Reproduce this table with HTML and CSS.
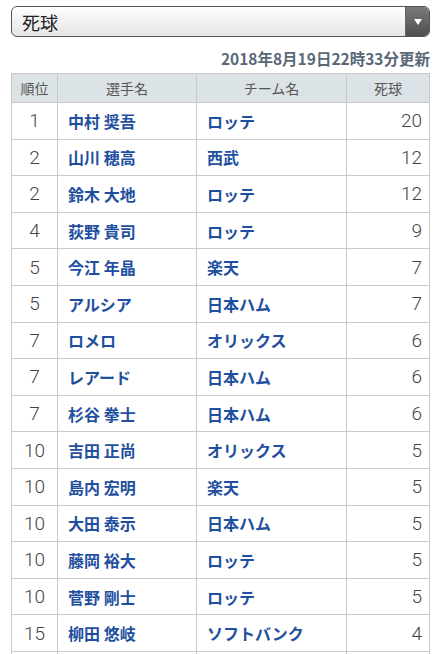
FILE: index.html
```html
<!DOCTYPE html>
<html lang="ja">
<head>
<meta charset="utf-8">
<link rel="stylesheet" href="styles.css">
</head>
<body>
<div class="page">
  <div class="select">
    <span class="select-label">死球</span>
    <span class="select-btn"><svg width="10" height="8" viewBox="0 0 10 8"><polygon points="1,1 9,1 5,7" fill="#fff"/></svg></span>
  </div>
  <div class="updated">2018年8月19日22時33分更新</div>
  <table class="rank">
    <thead>
      <tr><th class="c-rank">順位</th><th class="c-name">選手名</th><th class="c-team">チーム名</th><th class="c-val">死球</th></tr>
    </thead>
    <tbody>
      <tr><td class="c-rank">1</td><td class="c-name">中村 奨吾</td><td class="c-team">ロッテ</td><td class="c-val">20</td></tr>
      <tr><td class="c-rank">2</td><td class="c-name">山川 穂高</td><td class="c-team">西武</td><td class="c-val">12</td></tr>
      <tr><td class="c-rank">2</td><td class="c-name">鈴木 大地</td><td class="c-team">ロッテ</td><td class="c-val">12</td></tr>
      <tr><td class="c-rank">4</td><td class="c-name">荻野 貴司</td><td class="c-team">ロッテ</td><td class="c-val">9</td></tr>
      <tr><td class="c-rank">5</td><td class="c-name">今江 年晶</td><td class="c-team">楽天</td><td class="c-val">7</td></tr>
      <tr><td class="c-rank">5</td><td class="c-name">アルシア</td><td class="c-team">日本ハム</td><td class="c-val">7</td></tr>
      <tr><td class="c-rank">7</td><td class="c-name">ロメロ</td><td class="c-team">オリックス</td><td class="c-val">6</td></tr>
      <tr><td class="c-rank">7</td><td class="c-name">レアード</td><td class="c-team">日本ハム</td><td class="c-val">6</td></tr>
      <tr><td class="c-rank">7</td><td class="c-name">杉谷 拳士</td><td class="c-team">日本ハム</td><td class="c-val">6</td></tr>
      <tr><td class="c-rank">10</td><td class="c-name">吉田 正尚</td><td class="c-team">オリックス</td><td class="c-val">5</td></tr>
      <tr><td class="c-rank">10</td><td class="c-name">島内 宏明</td><td class="c-team">楽天</td><td class="c-val">5</td></tr>
      <tr><td class="c-rank">10</td><td class="c-name">大田 泰示</td><td class="c-team">日本ハム</td><td class="c-val">5</td></tr>
      <tr><td class="c-rank">10</td><td class="c-name">藤岡 裕大</td><td class="c-team">ロッテ</td><td class="c-val">5</td></tr>
      <tr><td class="c-rank">10</td><td class="c-name">菅野 剛士</td><td class="c-team">ロッテ</td><td class="c-val">5</td></tr>
      <tr><td class="c-rank">15</td><td class="c-name">柳田 悠岐</td><td class="c-team">ソフトバンク</td><td class="c-val">4</td></tr>
      <tr><td class="c-rank">&nbsp;</td><td class="c-name">&nbsp;</td><td class="c-team">&nbsp;</td><td class="c-val">&nbsp;</td></tr>
    </tbody>
  </table>
</div>
</body>
</html>
```

FILE: styles.css
```css
html, body {
  margin: 0;
  padding: 0;
  background: #fff;
}
body {
  font-family: "Noto Sans CJK JP", "Noto Sans", sans-serif;
  color: #333;
  overflow: hidden;
  height: 654px;
}
.page {
  padding: 6px 10px 0 11px;
}
.select {
  display: flex;
  align-items: stretch;
  height: 31px;
  box-sizing: border-box;
  border: 1px solid #555;
  border-radius: 6px;
  background: linear-gradient(#ffffff, #e4e4e4);
  overflow: hidden;
}
.select-label {
  flex: 1;
  display: flex;
  align-items: center;
  padding-left: 10px;
  font-size: 18px;
  color: #222;
  line-height: 1;
}
.select-btn {
  width: 23px;
  display: flex;
  align-items: center;
  justify-content: center;
  background: linear-gradient(#7a7a7a, #4e4e4e);
  border-left: 1px solid #666;
}
.updated {
  text-align: right;
  font-size: 15.5px;
  font-weight: bold;
  color: #5a6878;
  line-height: 20px;
  margin-top: 11px;
  margin-bottom: 5px;
}
.rank {
  width: 419px;
  border-collapse: collapse;
  table-layout: fixed;
}
.rank th, .rank td {
  border: 1px solid #c9c9c9;
  padding: 0;
}
.rank th {
  background: #dbe3e6;
  color: #555;
  font-weight: normal;
  font-size: 14px;
  height: 28px;
  text-align: center;
}
.rank td {
  height: 35.6px;
  font-size: 16px;
}
.rank .c-rank { width: 45px; }
.rank .c-name { width: 138px; }
.rank .c-team { width: 149px; }
td.c-rank {
  text-align: center;
  font-family: Roboto, "Noto Sans", sans-serif;
  font-size: 19px;
  font-weight: 300;
  color: #444;
}
td.c-name, td.c-team {
  color: #1f4f9f;
  font-weight: bold;
  padding-left: 10px;
}
td.c-val {
  text-align: right;
  padding-right: 7px;
  font-family: Roboto, "Noto Sans", sans-serif;
  font-size: 19px;
  font-weight: 300;
  color: #444;
}
```
